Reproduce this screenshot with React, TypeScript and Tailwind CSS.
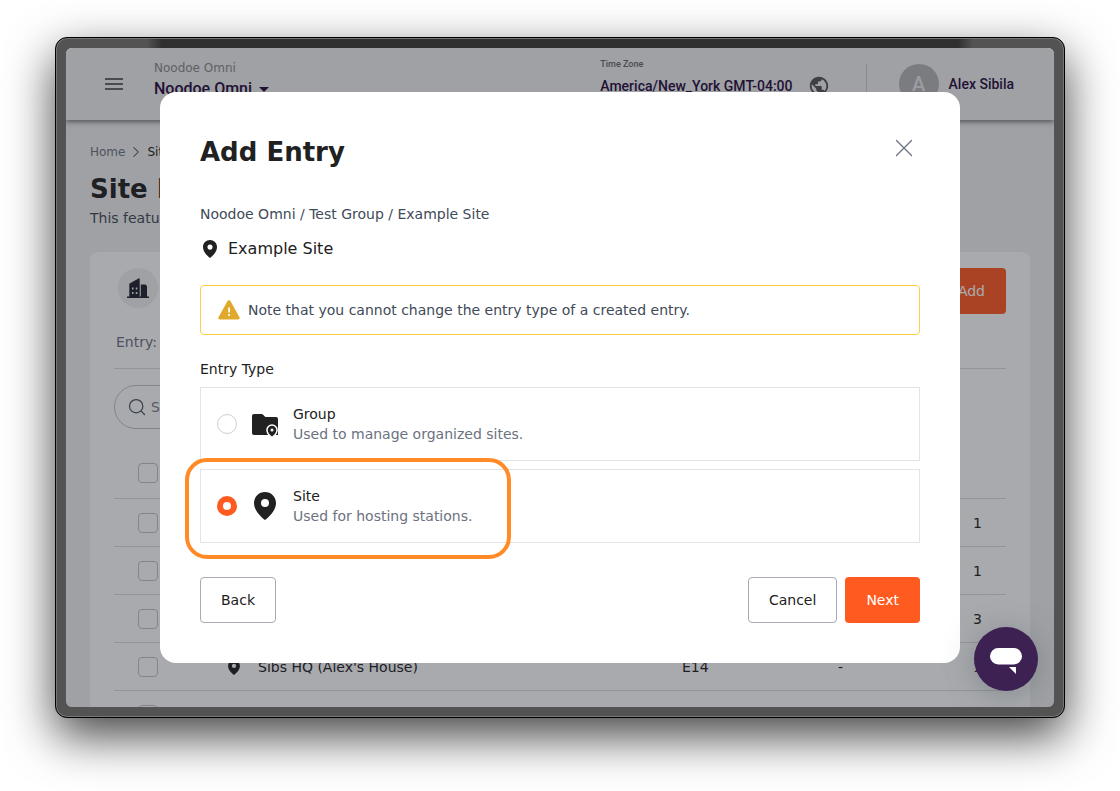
import { useState } from 'react';
import { MdArrowDropDown, MdMenu, MdPublic } from 'react-icons/md';
import { ChevronRight, Search, X } from 'lucide-react';

const rows = [
  { name: '', code: '', parent: '', stations: '1' },
  { name: '', code: '', parent: '', stations: '1' },
  { name: '', code: '', parent: '', stations: '3' },
  { name: "Sibs HQ (Alex's House)", code: 'E14', parent: '-', stations: '1' },
  { name: '', code: '', parent: '', stations: '' },
];

function PinIcon({ className }: { className?: string }) {
  return (
    <svg viewBox="0 0 22 28" fill="currentColor" className={className} aria-hidden="true">
      <path
        fillRule="evenodd"
        d="M11 0C4.9 0 0 4.8 0 11.1 0 18.2 6.2 24.3 11 28c4.8-3.7 11-9.8 11-16.9C22 4.8 17.1 0 11 0Zm0 7a4 4 0 1 1 0 8 4 4 0 0 1 0-8Z"
      />
    </svg>
  );
}

function FolderPinIcon({ className }: { className?: string }) {
  return (
    <svg viewBox="0 -2 27 25" fill="currentColor" className={className} aria-hidden="true">
      <path d="M2 0h7.5c.6 0 1 .2 1.4.6L13.3 3H24a2 2 0 0 1 2 2v16H2a2 2 0 0 1-2-2V2C0 .9.9 0 2 0Z" />
      <path
        d="M20 22.6c-2.6-2-4.3-4.1-4.3-6.6a4.3 4.3 0 0 1 8.6 0c0 2.500-1.700 4.600-4.300 6.600Z"
        stroke="#fff"
        strokeWidth="3"
        paintOrder="stroke"
      />
      <circle cx="20" cy="16" r="1.5" fill="#fff" />
    </svg>
  );
}

function BuildingIcon({ className }: { className?: string }) {
  return (
    <svg viewBox="0 0 22 20" fill="currentColor" className={className} aria-hidden="true">
      <path
        fillRule="evenodd"
        d="M0 18.500h2.300V5.800L11.500.4c.700-.4 1.200 0 1.200.7v17.400h1.100V6.500h4.700l1.500 1.500v10.500h2V20H0v-1.500ZM5 9.500v2h1.500v-2H5Zm3.800 0v2h1.500v-2H8.800ZM5 14v2h1.500v-2H5Zm3.800 0v2h1.500v-2H8.800Z"
      />
    </svg>
  );
}

function WarningIcon({ className }: { className?: string }) {
  return (
    <svg viewBox="0 0 22 20" className={className} aria-hidden="true">
      <path d="M9.4 1.2a1.9 1.9 0 0 1 3.2 0l8.9 16c.7 1.2-.1 2.3-1.4 2.3H1.9C.6 19.5-.2 18.4.5 17.2Z" fill="#e0a92c" />
      <path d="M10.2 7.500h1.700v5h-1.700zM10.200 14h1.700v2h-1.700z" fill="#fff" />
    </svg>
  );
}

function TopBar() {
  return (
    <header className="relative flex h-[72px] shrink-0 items-start justify-between bg-[#f0f0f0] pr-10 pl-9 font-[Roboto,sans-serif] shadow-[0_2px_5px_rgba(0,0,0,0.5)]">
      <div className="flex">
        <button type="button" aria-label="Open menu" className="mt-6 flex text-[#666]">
          <MdMenu size={24} />
        </button>
        <div className="ml-7 pt-3">
          <p className="font-['DejaVu_Sans',sans-serif] text-xs leading-4 text-[#888]">Noodoe Omni</p>
          <button type="button" className="mt-px flex items-center text-base leading-6 font-medium text-[#240a3c]">
            Noodoe Omni
            <MdArrowDropDown size={24} />
          </button>
        </div>
      </div>
      <div className="flex">
        <div className="pt-2.5">
          <p className="text-[9px] leading-3 font-medium text-[#666]">Time Zone</p>
          <button type="button" className="mt-1 flex items-center gap-[15px] text-sm leading-6 font-medium text-[#240a3c]">
            America/New_York GMT-04:00
            <MdPublic size={22} className="text-[#555]" />
          </button>
        </div>
        <div className="mt-4 ml-9 h-10 w-px bg-[#ccc]" />
        <div className="mt-4 ml-8 flex items-center gap-2.5">
          <span className="flex size-10 items-center justify-center rounded-full bg-[#b5b5b5] text-xl font-medium text-[#e8e8e8]">A</span>
          <span className="text-sm font-medium text-[#240a3c]">Alex Sibila</span>
        </div>
      </div>
    </header>
  );
}

function SitePage() {
  return (
    <main className="min-h-0 flex-1 overflow-hidden px-6 pt-[22px]">
      <nav className="flex items-center gap-0.5 text-xs leading-5 text-[#212121]">
        <a href="#home" className="text-[#6b7280]">Home</a>
        <ChevronRight size={18} strokeWidth={1.5} className="text-[#777]" />
        <a href="#sites">Sites</a>
      </nav>
      <h1 className="mt-[11px] text-[26px] leading-8 font-bold text-[#212121]">Site Management</h1>
      <p className="mt-[3px] text-sm leading-5 text-[#414a58]">This feature</p>

      <section className="mt-6 rounded-lg bg-white px-6 pt-4">
        <div className="flex items-start justify-between">
          <span className="ml-1 flex size-10 items-center justify-center rounded-full bg-[#f0f0f0] text-[#1d1f2a]">
            <BuildingIcon className="h-5 w-[22px]" />
          </span>
          <button type="button" className="h-[46px] rounded bg-[#ff5a1f] px-[21px] text-sm text-white">+ Add</button>
        </div>
        <p className="mt-[18px] ml-0.5 text-sm leading-5 text-[#6b7280]">Entry:</p>
        <hr className="mt-4 border-[#dcdcdc]" />
        <label className="mt-4 flex h-11 w-80 items-center gap-1 rounded-full border border-[#c4c4c4] px-3">
          <Search size={20} strokeWidth={1.5} className="shrink-0 text-[#4b5563]" />
          <input type="text" aria-label="Search" placeholder="Search" className="w-full text-sm text-[#212121] placeholder:text-[#7a808c]" />
        </label>
        <table className="mt-5 w-full table-fixed text-left text-sm text-[#212121]">
          <colgroup>
            <col className="w-24" />
            <col />
            <col className="w-[156px]" />
            <col className="w-[136px]" />
            <col className="w-11" />
          </colgroup>
          <thead>
            <tr className="h-[49px] border-b border-[#dcdcdc]">
              <th className="pl-6">
                <input type="checkbox" aria-label="Select all" className="block size-5 appearance-none rounded border border-[#c4c4c4]" />
              </th>
              <th />
              <th />
              <th />
              <th />
            </tr>
          </thead>
          <tbody>
            {rows.map((row, i) => (
              <tr key={i} className="h-12 border-b border-[#dcdcdc]">
                <td className="pt-0.5 pl-6">
                  <input type="checkbox" aria-label={`Select row ${i + 1}`} className="block size-5 appearance-none rounded border border-[#c4c4c4]" />
                </td>
                <td className="pt-0.5 pl-3">
                  {row.name && (
                    <span className="flex items-center gap-3">
                      <span className="flex w-6 justify-center">
                        <PinIcon className="h-[15px] w-3" />
                      </span>
                      {row.name}
                    </span>
                  )}
                </td>
                <td className="pt-0.5 pl-3">{row.code}</td>
                <td className="pt-0.5 pl-3">{row.parent}</td>
                <td className="pt-0.5 pl-[11px]">{row.stations}</td>
              </tr>
            ))}
          </tbody>
        </table>
      </section>
    </main>
  );
}

const entryTypes = [
  {
    id: 'group',
    label: 'Group',
    description: 'Used to manage organized sites.',
    icon: <FolderPinIcon className="h-[25px] w-[27px]" />,
  },
  {
    id: 'site',
    label: 'Site',
    description: 'Used for hosting stations.',
    icon: <PinIcon className="h-7 w-[22px]" />,
  },
];

function AddEntryDialog() {
  const [entryType, setEntryType] = useState('site');

  return (
    <div role="dialog" aria-label="Add Entry" className="w-[800px] max-w-full rounded-2xl bg-white p-10 text-[#212121]">
      <div className="flex h-10 items-center justify-between">
        <h2 className="text-[26px] leading-10 font-bold">Add Entry</h2>
        <button type="button" aria-label="Close" className="mb-2 flex size-8 items-center justify-center text-[#6b7280]">
          <X size={30} strokeWidth={1} />
        </button>
      </div>
      <p className="mt-8 text-sm leading-5 text-[#414a58]">Noodoe Omni / Test Group / Example Site</p>
      <p className="mt-[13px] flex items-center gap-2 text-base leading-6">
        <span className="flex w-5 justify-center">
          <PinIcon className="h-[18px] w-3.5" />
        </span>
        Example Site
      </p>
      <div className="mt-6 flex h-[50px] items-center gap-2 rounded border border-[#fccf45] px-[17px]">
        <WarningIcon className="h-5 w-[22px]" />
        <p className="text-sm text-[#414a58]">Note that you cannot change the entry type of a created entry.</p>
      </div>
      <fieldset className="mt-6">
        <legend className="text-sm leading-5">Entry Type</legend>
        <div className="mt-2 flex flex-col gap-2">
          {entryTypes.map((type) => (
            <label key={type.id} className="relative flex h-[74px] items-center border border-[#e3e3e3] px-4">
              <input
                type="radio"
                name="entryType"
                value={type.id}
                checked={entryType === type.id}
                onChange={() => setEntryType(type.id)}
                className="size-5 appearance-none rounded-full border border-[#cfcfcf] bg-white checked:border-[6px] checked:border-[#ff5a1f]"
              />
              <span className="ml-3 flex w-8 justify-center">{type.icon}</span>
              <span className="ml-3 text-sm leading-5">
                <span className="block">{type.label}</span>
                <span className="block text-[#6b7280]">{type.description}</span>
              </span>
              {type.id === 'site' && (
                <span className="pointer-events-none absolute -top-3 -left-4 h-[101px] w-[326px] rounded-[22px] border-4 border-[#ff8a26]" />
              )}
            </label>
          ))}
        </div>
      </fieldset>
      <div className="mt-[34px] flex justify-between text-sm">
        <button type="button" className="h-[46px] rounded border border-[#a9aab4] px-5">Back</button>
        <div className="flex gap-2">
          <button type="button" className="h-[46px] rounded border border-[#a9aab4] px-5">Cancel</button>
          <button type="button" className="h-[46px] rounded bg-[#ff5a1f] px-[21px] text-white">Next</button>
        </div>
      </div>
    </div>
  );
}

function ChatButton() {
  return (
    <button
      type="button"
      aria-label="Open chat"
      className="absolute right-4 bottom-4 flex size-16 items-center justify-center rounded-full bg-[#3d2152] shadow-[0_4px_32px_rgba(60,80,80,0.35)]"
    >
      <svg viewBox="0 0 32 27" fill="#fff" className="mt-1 w-8" aria-hidden="true">
        <rect width="32" height="16.5" rx="8.25" />
        <path d="M19 19h7v7Z" />
      </svg>
    </button>
  );
}

export default function App() {
  return (
    <div className="flex h-screen bg-white px-[55px] pt-[37px] pb-[73px] font-['DejaVu_Sans',sans-serif]">
      <div className="flex min-w-0 flex-1 rounded-xl border border-black bg-[#535353] bg-[linear-gradient(90deg,#535353_9%,#303030_10.5%,#303030_89.5%,#535353_91%)] bg-[length:100%_11px] bg-no-repeat p-2.5 shadow-[0_18px_48px_rgba(0,0,0,0.74),inset_0_0_0_1px_#777]">
        <div className="relative flex min-w-0 flex-1 flex-col overflow-hidden rounded-md bg-[#f0f0f1]">
          <TopBar />
          <SitePage />
          <div className="absolute inset-0 flex items-center justify-center bg-[rgba(29,31,42,0.38)]">
            <AddEntryDialog />
          </div>
          <ChatButton />
        </div>
      </div>
    </div>
  );
}
